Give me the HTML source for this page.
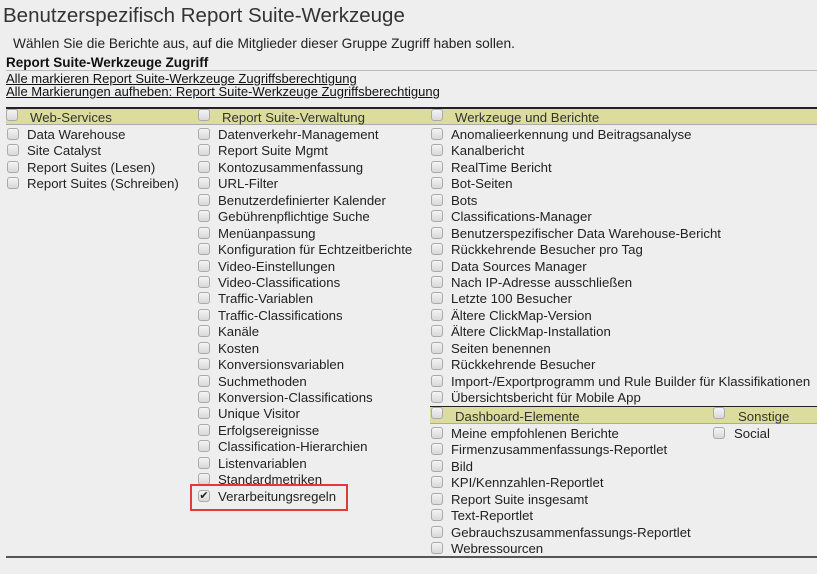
<!DOCTYPE html>
<html><head><meta charset="utf-8"><style>
*{margin:0;padding:0;box-sizing:border-box}
body{width:817px;height:574px;background:#eeeeee;font-family:"Liberation Sans",Arial,sans-serif;color:#222;position:relative;overflow:hidden}
.a{position:absolute;white-space:nowrap}
h1{position:absolute;left:3px;top:4px;font-size:20.5px;font-weight:normal;color:#333}
.sub{left:13px;top:36px;font-size:13.7px;color:#222}
.rs{left:6px;top:55px;font-size:13.5px;font-weight:bold;color:#111}
.ln{left:6px;font-size:13px;text-decoration:underline;color:#111}
.band{position:absolute;background:#dcdc9c;height:18px;border-top:2px solid #222;border-bottom:1px solid #aaa}
.col{position:absolute;font-size:13.2px;line-height:16.45px}
.col div{height:16.45px;position:relative;padding-left:20px;white-space:nowrap}
.cb{position:absolute;left:0;top:1px;width:12px;height:12px;border:1px solid #aaa;border-radius:3px;background:linear-gradient(#f4f4f4,#d8d8d8)}
.col div .cb{left:0}
.hd{position:absolute;font-size:13.2px;color:#333;white-space:nowrap}
</style></head><body>
<h1>Benutzerspezifisch Report Suite-Werkzeuge</h1>
<div class="a sub">Wählen Sie die Berichte aus, auf die Mitglieder dieser Gruppe Zugriff haben sollen.</div>
<div class="a rs">Report Suite-Werkzeuge Zugriff</div>
<div class="a" style="left:6px;top:70px;width:811px;height:1px;background:#bbb"></div>
<div class="a ln" style="top:71px">Alle markieren Report Suite-Werkzeuge Zugriffsberechtigung</div>
<div class="a ln" style="top:84px">Alle Markierungen aufheben: Report Suite-Werkzeuge Zugriffsberechtigung</div>

<div class="band" style="left:6px;top:107px;width:811px"></div>
<span class="cb" style="left:6px;top:109px"></span><span class="hd" style="left:30px;top:110px">Web-Services</span>
<span class="cb" style="left:198px;top:109px"></span><span class="hd" style="left:222px;top:110px">Report Suite-Verwaltung</span>
<span class="cb" style="left:431px;top:109px"></span><span class="hd" style="left:455px;top:110px">Werkzeuge und Berichte</span>

<div class="col" style="left:7px;top:127px">
<div><span class="cb"></span>Data Warehouse</div>
<div><span class="cb"></span>Site Catalyst</div>
<div><span class="cb"></span>Report Suites (Lesen)</div>
<div><span class="cb"></span>Report Suites (Schreiben)</div>
</div>

<div class="col" style="left:198px;top:127px">
<div><span class="cb"></span>Datenverkehr-Management</div>
<div><span class="cb"></span>Report Suite Mgmt</div>
<div><span class="cb"></span>Kontozusammenfassung</div>
<div><span class="cb"></span>URL-Filter</div>
<div><span class="cb"></span>Benutzerdefinierter Kalender</div>
<div><span class="cb"></span>Gebührenpflichtige Suche</div>
<div><span class="cb"></span>Menüanpassung</div>
<div><span class="cb"></span>Konfiguration für Echtzeitberichte</div>
<div><span class="cb"></span>Video-Einstellungen</div>
<div><span class="cb"></span>Video-Classifications</div>
<div><span class="cb"></span>Traffic-Variablen</div>
<div><span class="cb"></span>Traffic-Classifications</div>
<div><span class="cb"></span>Kanäle</div>
<div><span class="cb"></span>Kosten</div>
<div><span class="cb"></span>Konversionsvariablen</div>
<div><span class="cb"></span>Suchmethoden</div>
<div><span class="cb"></span>Konversion-Classifications</div>
<div><span class="cb"></span>Unique Visitor</div>
<div><span class="cb"></span>Erfolgsereignisse</div>
<div><span class="cb"></span>Classification-Hierarchien</div>
<div><span class="cb"></span>Listenvariablen</div>
<div><span class="cb"></span>Standardmetriken</div>
<div><span class="cb" style="font-size:11px;line-height:10px;text-align:center;color:#222">✔</span>Verarbeitungsregeln</div>
</div>
<div class="a" style="left:190px;top:484px;width:158px;height:27px;border:2px solid #e03a3a"></div>

<div class="col" style="left:431px;top:127px">
<div><span class="cb"></span>Anomalieerkennung und Beitragsanalyse</div>
<div><span class="cb"></span>Kanalbericht</div>
<div><span class="cb"></span>RealTime Bericht</div>
<div><span class="cb"></span>Bot-Seiten</div>
<div><span class="cb"></span>Bots</div>
<div><span class="cb"></span>Classifications-Manager</div>
<div><span class="cb"></span>Benutzerspezifischer Data Warehouse-Bericht</div>
<div><span class="cb"></span>Rückkehrende Besucher pro Tag</div>
<div><span class="cb"></span>Data Sources Manager</div>
<div><span class="cb"></span>Nach IP-Adresse ausschließen</div>
<div><span class="cb"></span>Letzte 100 Besucher</div>
<div><span class="cb"></span>Ältere ClickMap-Version</div>
<div><span class="cb"></span>Ältere ClickMap-Installation</div>
<div><span class="cb"></span>Seiten benennen</div>
<div><span class="cb"></span>Rückkehrende Besucher</div>
<div><span class="cb"></span>Import-/Exportprogramm und Rule Builder für Klassifikationen</div>
<div><span class="cb"></span>Übersichtsbericht für Mobile App</div>
</div>

<div class="band" style="left:430px;top:406px;width:387px;border-top-width:1px;height:18px"></div>
<span class="cb" style="left:431px;top:407px"></span><span class="hd" style="left:455px;top:409px">Dashboard-Elemente</span>
<span class="cb" style="left:713px;top:407px"></span><span class="hd" style="left:738px;top:409px">Sonstige</span>

<div class="col" style="left:431px;top:426px">
<div><span class="cb"></span>Meine empfohlenen Berichte</div>
<div><span class="cb"></span>Firmenzusammenfassungs-Reportlet</div>
<div><span class="cb"></span>Bild</div>
<div><span class="cb"></span>KPI/Kennzahlen-Reportlet</div>
<div><span class="cb"></span>Report Suite insgesamt</div>
<div><span class="cb"></span>Text-Reportlet</div>
<div><span class="cb"></span>Gebrauchszusammenfassungs-Reportlet</div>
<div><span class="cb"></span>Webressourcen</div>
</div>
<div class="col" style="left:713px;top:426px">
<div style="padding-left:21px"><span class="cb"></span>Social</div>
</div>

<div class="a" style="left:6px;top:556px;width:811px;height:2px;background:#555"></div>
</body></html>
